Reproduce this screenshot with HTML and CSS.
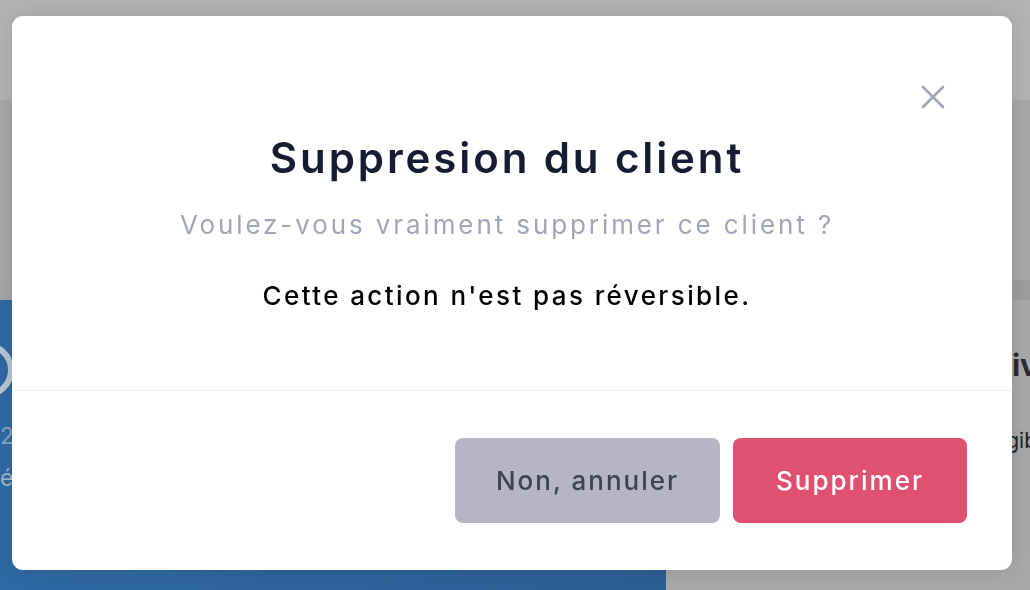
FILE: index.html
```html
<!DOCTYPE html>
<html lang="fr">
<head>
  <meta charset="UTF-8">
  <title>Clients</title>
  <link rel="stylesheet" href="styles.css">
</head>
<body>
  <div class="page">
    <div class="topbar"></div>
    <div class="toolbar"></div>
    <div class="cards">
      <div class="card card-blue">
        <div class="big-ring"></div>
        <div class="stat-num">2</div>
        <div class="stat-label">é</div>
      </div>
      <div class="card card-light">
        <div class="card-title">Activ</div>
        <div class="card-text">Éligib</div>
      </div>
    </div>
  </div>

  <div class="backdrop">
    <div class="modal">
      <div class="modal-body">
        <button class="close-btn" aria-label="Fermer">
          <svg width="24" height="24" viewBox="0 0 24 24">
            <path d="M2 2 L22 22 M22 2 L2 22" stroke="#a1a5b7" stroke-width="2.6" stroke-linecap="round"/>
          </svg>
        </button>
        <h1 class="modal-title">Suppresion du client</h1>
        <p class="modal-subtitle">Voulez-vous vraiment supprimer ce client ?</p>
        <p class="modal-text">Cette action n'est pas réversible.</p>
      </div>
      <div class="modal-footer">
        <button class="btn btn-light">Non, annuler</button>
        <button class="btn btn-danger">Supprimer</button>
      </div>
    </div>
  </div>
</body>
</html>
```

FILE: styles.css
```css
* { box-sizing: border-box; }
body {
  margin: 0;
  font-family: Inter, "Open Sans", sans-serif;
  background-color: #a6a6a6;
  width: 1030px;
  height: 590px;
  overflow: hidden;
}

/* page behind the modal (already dimmed) */
.page { display: flex; flex-direction: column; height: 590px; }
.topbar { height: 100px; background-color: #b3b3b3; }
.toolbar { height: 180px; background-color: #a7a7a7; }
.cards {
  flex: 1;
  display: grid;
  grid-template-columns: 666px 1fr;
  overflow: hidden;
}
.card-blue {
  margin-top: 20px;
  background: linear-gradient(90deg, #2f69a3, #2c5f93);
  color: #8aa6c4;
  padding: 42px 0 0 0;
  overflow: hidden;
}
.big-ring {
  width: 56px; height: 56px;
  margin-left: -42px;
  border: 6px solid #b7c5d4;
  border-radius: 50%;
}
.stat-num { font-size: 23px; margin-top: 24px; }
.stat-label { font-size: 23px; color: #9fb4cb; margin-top: 14px; }
.card-light {
  background-color: #a8a8a8;
  border-top: 20px solid #9d9d9d;
  display: flex;
  flex-direction: column;
  align-items: flex-end;
  padding-top: 47px;
  overflow: hidden;
}
.card-title { font-size: 30px; font-weight: 700; color: #2a2a33; line-height: 36px; margin-right: -8px; }
.card-text { font-size: 21px; color: #222; margin-top: 44px; line-height: 28px; margin-right: -7px; }

/* modal */
.backdrop {
  position: fixed;
  inset: 0;
  padding: 16px 18px 20px 12px;
}
.modal {
  width: 1000px;
  height: 554px;
  background-color: #fff;
  border-radius: 11px;
  box-shadow: 0 0 20px rgba(0, 0, 0, 0.12);
  display: flex;
  flex-direction: column;
}
.modal-body {
  position: relative;
  height: 375px;
  border-bottom: 1px solid #eff2f5;
  padding: 116px 10px 0 0;
  text-align: center;
}
.close-btn {
  position: absolute;
  top: 69px;
  right: 67px;
  border: none;
  background: none;
  padding: 0;
  width: 24px;
  height: 24px;
}
.modal-title {
  margin: 0;
  font-size: 42px;
  line-height: 52px;
  font-weight: 600;
  color: #181c32;
  letter-spacing: 2.9px;
}
.modal-subtitle {
  margin: 24px 0 0;
  font-size: 26px;
  line-height: 34px;
  color: #a1a5b7;
  letter-spacing: 2.9px;
}
.modal-text {
  margin: 37px 0 0;
  font-size: 26px;
  line-height: 34px;
  font-weight: 500;
  color: #000;
  letter-spacing: 2.4px;
}
.modal-footer {
  flex: 1;
  display: flex;
  justify-content: flex-end;
  align-items: center;
  gap: 13px;
  padding-right: 45px;
}
.btn {
  height: 85px;
  border: none;
  border-radius: 8px;
  font-family: inherit;
  font-size: 26px;
  font-weight: 500;
  letter-spacing: 2px;
}
.btn-light { width: 265px; background-color: #b5b5c3; color: #3f4254; }
.btn-danger { width: 234px; background-color: #e0516f; color: #fff; }
```
